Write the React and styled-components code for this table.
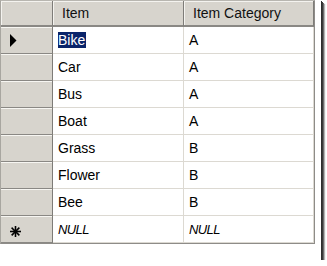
import React from "react";
import styled, { createGlobalStyle } from "styled-components";

const Global = createGlobalStyle`
  html, body { margin: 0; padding: 0; background: #ffffff; }
  body { font-family: "Liberation Sans", Arial, sans-serif; }
`;

const Frame = styled.div`
  width: 321px;
  height: 260px;
  background: #ffffff;
  box-shadow: 1px 1px 0 #2e2e2e, 2px 2px 0 #3a3a3a, 3px 3px 0 #6a6a6a, 4px 4px 1px #b5b5b5;
`;

const Grid = styled.div`
  display: grid;
  grid-template-columns: 52px 131px 130px;
  grid-auto-rows: 27px;
  grid-template-rows: 26px;
  width: fit-content;
  border: 1px solid #8e8c88;
  border-top-color: #b8b6b0;
  border-left-color: #a8a6a0;
  background: #ffffff;
`;

const HeaderCell = styled.div`
  box-sizing: border-box;
  background: #d7d4cd;
  border-right: 1px solid #7e7c78;
  border-bottom: 2px solid #8a8884;
  box-shadow: inset 1px 1px 0 #f4f3ef;
  display: flex;
  align-items: center;
  padding-left: ${(p) => p.$pad || 0}px;
  font-size: 14px;
  color: #111;
`;

const RowHead = styled.div`
  box-sizing: border-box;
  background: #d7d4cd;
  border-right: 1px solid #7e7c78;
  border-bottom: 1px solid #8a8884;
  box-shadow: inset 0 1px 0 #f7f6f2;
  display: flex;
  align-items: center;
  padding-left: 9px;
`;

const Cell = styled.div`
  box-sizing: border-box;
  border-right: 1px solid #dcd9d2;
  border-bottom: 1px solid #dcd9d2;
  display: flex;
  align-items: center;
  padding-left: 5px;
  font-size: 14px;
  color: #000;
  font-style: ${(p) => (p.$null ? "italic" : "normal")};
  letter-spacing: ${(p) => (p.$null ? "-0.6px" : "0")};
  ${(p) => (p.$null ? "font-size: 13px;" : "")}
`;

const Selected = styled.span`
  background: #0a246a;
  color: #ffffff;
  padding: 1px 1px 1px 0;
  line-height: 14px;
`;

const Arrow = () => (
  <svg width="7" height="13" viewBox="0 0 7 13">
    <polygon points="0,0 6.5,6.5 0,13" fill="#000" />
  </svg>
);

const Star = () => (
  <svg width="11" height="11" viewBox="0 0 11 11" style={{ marginTop: 4 }}>
    <g stroke="#000" strokeWidth="1.6" strokeLinecap="square">
      <line x1="5.5" y1="0.8" x2="5.5" y2="10.2" />
      <line x1="0.8" y1="5.5" x2="10.2" y2="5.5" />
      <line x1="2.2" y1="2.2" x2="8.8" y2="8.8" />
      <line x1="8.8" y1="2.2" x2="2.2" y2="8.8" />
    </g>
  </svg>
);

const rows = [
  ["Bike", "A"],
  ["Car", "A"],
  ["Bus", "A"],
  ["Boat", "A"],
  ["Grass", "B"],
  ["Flower", "B"],
  ["Bee", "B"],
];

export default function App() {
  return (
    <>
      <Global />
      <Frame>
        <Grid>
          <HeaderCell />
          <HeaderCell $pad={9}>Item</HeaderCell>
          <HeaderCell $pad={9}>Item Category</HeaderCell>
          {rows.map(([item, cat], i) => (
            <React.Fragment key={item}>
              <RowHead>{i === 0 ? <Arrow /> : null}</RowHead>
              <Cell>{i === 0 ? <Selected>{item}</Selected> : item}</Cell>
              <Cell>{cat}</Cell>
            </React.Fragment>
          ))}
          <RowHead>
            <Star />
          </RowHead>
          <Cell $null>NULL</Cell>
          <Cell $null>NULL</Cell>
        </Grid>
      </Frame>
    </>
  );
}
